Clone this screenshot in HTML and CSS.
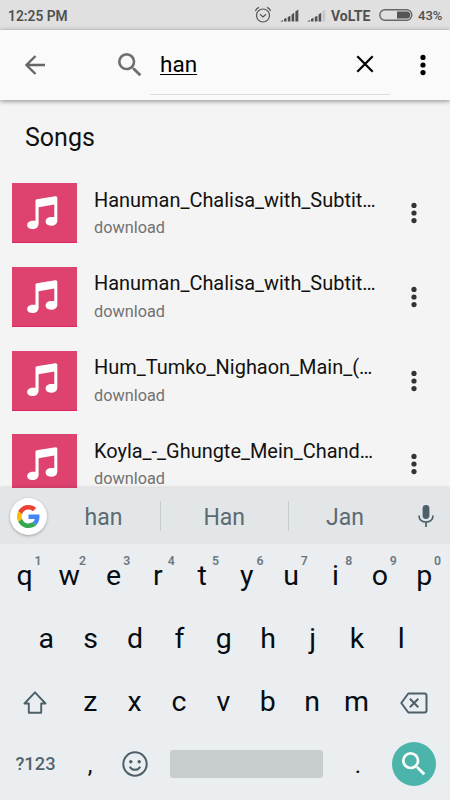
FILE: index.html
```html
<!DOCTYPE html>
<html lang="en">
<head>
<meta charset="utf-8">
<title>Music search</title>
<link rel="stylesheet" href="styles.css">
</head>
<body>
<svg class="defs" aria-hidden="true">
  <symbol id="dots" viewBox="0 0 8 24"><circle cx="4" cy="4.400" r="2.600"/><circle cx="4" cy="12" r="2.600"/><circle cx="4" cy="19.600" r="2.600"/></symbol>
  <symbol id="search" viewBox="0 0 24 24"><path d="M15.500 14h-.79l-.28-.27A6.470 6.470 0 0 0 16 9.500 6.500 6.500 0 1 0 9.500 16c1.610 0 3.090-.59 4.230-1.570l.27.28v.79l5 4.990L20.490 19l-4.990-5zm-6 0C7.010 14 5 11.990 5 9.500S7.010 5 9.500 5 14 7.010 14 9.500 11.990 14 9.500 14z"/></symbol>
  <symbol id="note" viewBox="0 0 31 33"><path d="M8.500 4.800Q8.500 3.600 9.900 3.200L28.400.2Q30.300 0 30.300 1.800V24.500C30.300 28.300 27.500 29.700 24 29.700C20.600 29.700 18.600 28.300 18.600 25.600C18.600 22.700 21 21 24.500 21H27.300V8.600L11.600 11.200V27.300C11.600 31.400 9 33 5.500 33C2 33 .2 31.600.2 29.200C.2 26.300 2.600 24.700 6 24.700H8.500Z"/></symbol>
  <symbol id="signal" viewBox="0 0 19 13"><path d="M0 12.500 3 11V12.500ZM4 10l2.500-1.200v3.700H4ZM7.800 8l2.600-1.300v5.800H7.800ZM11.600 5.500l2.600-1.700v8.700h-2.600Z"/></symbol>
</svg>
<div class="screen">
  <div class="status">
    <span class="time">12:25 PM</span>
    <svg class="alarm" viewBox="0 0 18 18"><circle cx="9" cy="9.500" r="6.500"/><path d="M1.400 5Q2.300 2.300 5 1.400M13 1.400Q15.700 2.300 16.600 5M6 8.300 9 11l3-2.700"/></svg>
    <svg class="signal" viewBox="0 0 19 13"><use href="#signal"/><path d="M15.400 2.500 18.300.5v12h-2.900Z"/></svg>
    <svg class="signal second" viewBox="0 0 19 13"><use href="#signal"/><path class="faint" d="M15.400 2.500 18.300.5v12h-2.900Z"/></svg>
    <span class="volte">VoLTE</span>
    <svg class="battery" viewBox="0 0 34 12"><rect class="shell" x=".8" y=".8" width="32" height="10.400" rx="5.200"/><path class="charge" d="M18 2.500H28.500Q31.300 3 31.300 6T28.500 9.500H18Z"/></svg>
    <span class="percent">43%</span>
  </div>

  <header class="toolbar">
    <svg class="back" viewBox="0 0 20 20"><path d="M10.500 1 1.500 10l9 9M1.500 10H20"/></svg>
    <div class="field">
      <svg class="lens"><use href="#search"/></svg>
      <div class="query"><span class="typed">han</span>
        <svg class="clear" viewBox="0 0 18 18"><path d="m1.300 1.300 15.400 15.400M16.700 1.300 1.300 16.700"/></svg>
      </div>
    </div>
    <svg class="more"><use href="#dots"/></svg>
  </header>

  <main class="results">
    <h1>Songs</h1>
    <div class="song"><div class="cover"><svg><use href="#note"/></svg></div><div class="info"><div class="title">Hanuman_Chalisa_with_Subtit…</div><div class="folder">download</div></div><svg class="menu"><use href="#dots"/></svg></div>
    <div class="song"><div class="cover"><svg><use href="#note"/></svg></div><div class="info"><div class="title">Hanuman_Chalisa_with_Subtit…</div><div class="folder">download</div></div><svg class="menu"><use href="#dots"/></svg></div>
    <div class="song"><div class="cover"><svg><use href="#note"/></svg></div><div class="info"><div class="title">Hum_Tumko_Nighaon_Main_(…</div><div class="folder">download</div></div><svg class="menu"><use href="#dots"/></svg></div>
    <div class="song"><div class="cover"><svg><use href="#note"/></svg></div><div class="info"><div class="title">Koyla_-_Ghungte_Mein_Chand…</div><div class="folder">download</div></div><svg class="menu"><use href="#dots"/></svg></div>
  </main>

  <section class="keyboard">
    <div class="suggestions">
      <div class="google"><svg viewBox="0 0 48 48"><path fill="#ea4335" d="M24 9.500c3.540 0 6.710 1.220 9.210 3.600l6.850-6.850C35.900 2.380 30.470 0 24 0 14.620 0 6.510 5.380 2.560 13.220l7.980 6.190C12.430 13.720 17.740 9.500 24 9.500z"/><path fill="#4285f4" d="M46.980 24.550c0-1.570-.15-3.090-.38-4.550H24v9.020h12.940c-.58 2.960-2.260 5.480-4.780 7.180l7.730 6c4.510-4.180 7.090-10.360 7.090-17.650z"/><path fill="#fbbc05" d="M10.530 28.590c-.48-1.450-.76-2.990-.76-4.590s.27-3.140.76-4.590l-7.980-6.190C.92 16.460 0 20.120 0 24s.92 7.540 2.560 10.780l7.970-6.190z"/><path fill="#34a853" d="M24 48c6.480 0 11.930-2.130 15.890-5.810l-7.730-6c-2.150 1.450-4.920 2.300-8.160 2.300-6.260 0-11.570-4.220-13.470-9.910l-7.980 6.190C6.510 42.620 14.620 48 24 48z"/></svg></div>
      <span class="word">han</span><span class="word">Han</span><span class="word">Jan</span>
      <svg class="mic" viewBox="0 0 16 22"><rect x="4.600" y="0" width="6.800" height="14" rx="3.400"/><path d="M1 10.500C1 14.500 4 17 8 17s7-2.500 7-6.500M8 17v5"/></svg>
    </div>
    <div class="row top">
      <span class="key">q<sup>1</sup></span><span class="key">w<sup>2</sup></span><span class="key">e<sup>3</sup></span><span class="key">r<sup>4</sup></span><span class="key">t<sup>5</sup></span><span class="key">y<sup>6</sup></span><span class="key">u<sup>7</sup></span><span class="key">i<sup>8</sup></span><span class="key">o<sup>9</sup></span><span class="key">p<sup>0</sup></span>
    </div>
    <div class="row middle">
      <span class="key">a</span><span class="key">s</span><span class="key">d</span><span class="key">f</span><span class="key">g</span><span class="key">h</span><span class="key">j</span><span class="key">k</span><span class="key">l</span>
    </div>
    <div class="row lower">
      <span class="wide"><svg class="shift" viewBox="0 0 24 24"><path d="M12 1.300 1.500 12.500h4.300v9.300h12.400v-9.300h4.300Z"/></svg></span>
      <span class="key">z</span><span class="key">x</span><span class="key">c</span><span class="key">v</span><span class="key">b</span><span class="key">n</span><span class="key">m</span>
      <span class="wide"><svg class="erase" viewBox="0 0 28 22"><path d="M8.300 1.500H24.500Q26.500 1.500 26.500 3.500v15q0 2-2 2H8.300L1.300 11ZM9.900 6.800l8.400 8.400M18.300 6.800l-8.400 8.400" /></svg></span>
    </div>
    <div class="row bottom">
      <span class="symbols">?123</span>
      <span class="key mark">,</span>
      <span class="key"><svg class="smile" viewBox="0 0 26 26"><circle class="line" cx="13" cy="13" r="11.700"/><circle cx="8.800" cy="10.700" r="1.700"/><circle cx="17.200" cy="10.700" r="1.700"/><path class="line" d="M7.800 15.700Q9.500 18.800 13 18.800t5.200-3.100"/></svg></span>
      <span class="space"></span>
      <span class="key mark stop">.</span>
      <span class="enter"><svg><use href="#search"/></svg></span>
    </div>
  </section>
</div>
</body>
</html>
```
FILE: styles.css
```css
* { box-sizing: border-box; }
body { margin: 0; font-family: Roboto, "Liberation Sans", sans-serif; }
svg { display: block; flex: none; }
.defs { position: absolute; width: 0; height: 0; }

.screen { width: 450px; height: 800px; overflow: hidden; display: flex; flex-direction: column; background: #f4f4f4; }

.status { flex: none; height: 30px; display: flex; align-items: center; padding: 1px 8px 0; background: #e0e0e0; color: #505050; font-size: 14px; font-weight: 500; }
.time { flex: 1; font-weight: 600; font-size: 13.8px; }
.alarm { width: 18px; height: 18px; margin: -2px 8px 0 0; fill: none; stroke: #555; stroke-width: 1.2; }
.signal { width: 19px; height: 13px; margin-right: 8px; fill: #505050; }
.signal.second { margin-right: 5px; }
.faint { fill: #c8c8c8; }
.volte { width: 41px; margin-right: 7px; font-weight: 700; }
.battery { width: 34px; height: 12px; margin-right: 5px; margin-top: -1px; }
.shell { fill: none; stroke: #666; stroke-width: 1.4; }
.charge { fill: #555; }
.percent { width: 24px; font-size: 13px; white-space: nowrap; }

.toolbar { position: relative; flex: none; height: 70px; display: flex; align-items: center; padding: 0 23.5px 0 25px; background: #fafafa; box-shadow: 0 1px 5px rgba(0, 0, 0, .45); }
.back { width: 20px; height: 20px; margin-right: 69px; fill: none; stroke: #666; stroke-width: 2.3; }
.field { display: flex; align-items: flex-start; height: 70px; width: 276px; }
.lens { width: 32px; height: 32px; margin: 19px 4px 0 0; fill: #6e6e6e; }
.query { width: 240px; height: 65px; padding: 4px 16px 0 10px; border-bottom: 1px solid #dcdcdc; display: flex; align-items: center; justify-content: space-between; }
.typed { color: #000; font-size: 22.5px; line-height: 28px; text-decoration: underline; text-decoration-thickness: 1px; text-underline-offset: 2px; }
.clear { width: 18px; height: 18px; fill: none; stroke: #000; stroke-width: 2.2; }
.more { width: 8px; height: 24px; margin-left: auto; fill: #000; }

.results { flex: none; height: 388px; overflow: hidden; }
h1 { margin: 0; padding: 23px 25px 0; height: 83.300px; font-size: 25px; line-height: 30px; font-weight: 400; color: #111; }
.song { display: flex; height: 83.7px; padding-left: 11.5px; }
.cover { width: 65.500px; height: 60px; padding: 12.700px 0 0 15px; background: #de4370; border-bottom: 1px solid #e02468; }
.cover svg { width: 31px; height: 33px; fill: #fff; }
.info { width: 310px; padding: 4.300px 0 0 17px; }
.title { font-size: 19.950px; line-height: 25px; color: #111; white-space: nowrap; }
.folder { margin-top: 4.700px; font-size: 16.300px; line-height: 22px; color: #727272; }
.menu { width: 8px; height: 24px; margin: 18px 0 0 22.500px; fill: #333; }

.keyboard { position: relative; flex: none; height: 312px; background: #ebeef1; box-shadow: 0 -1px 3px rgba(0, 0, 0, .12); }
.suggestions { height: 56px; display: flex; align-items: center; background: #e2e6e9; }
.google { width: 37px; height: 37px; margin: 0 0 0 10px; border-radius: 50%; background: #fff; display: grid; place-items: center; box-shadow: 0 1px 3px rgba(0, 0, 0, .3); }
.google svg { width: 23px; height: 23px; }
.word { width: 127.500px; height: 30px; border-right: 1px solid #c7cccf; text-align: center; font-size: 23px; line-height: 34px; color: #5c6a71; }
.google + .word { width: 114px; }
.word:nth-child(4) { width: 113px; border: 0; }
.mic { width: 16px; height: 22px; margin-left: 16px; fill: #4d6069; }
.mic path { fill: none; stroke: #4d6069; stroke-width: 1.7; }

.row { height: 63px; display: flex; align-items: center; padding: 0 2.500px; }
.key { position: relative; width: 44.400px; height: 63px; display: flex; align-items: center; justify-content: center; font-size: 28.500px; line-height: 34px; color: #060c12; }
.key sup { position: absolute; top: 9px; left: 32px; font-size: 12.300px; line-height: 16px; font-weight: 600; color: #6b7982; }
.middle { padding-left: 24px; }
.wide { width: 65.500px; display: flex; justify-content: center; }
.shift { width: 24px; height: 24px; margin-top: 2px; fill: none; stroke: #4d6069; stroke-width: 1.9; stroke-linejoin: round; }
.erase { width: 28px; height: 22px; margin: 3px 0 0 5px; fill: none; stroke: #4d6069; stroke-width: 2; stroke-linejoin: round; }
.bottom { margin-top: -1px; padding-left: 3px; }
.symbols { width: 65px; text-align: center; font-size: 18.300px; font-weight: 500; color: #52646d; }
.mark { font-size: 24px; padding-top: 3px; }
.smile { width: 26px; height: 26px; fill: #4d6069; }
.smile .line { fill: none; stroke: #4d6069; stroke-width: 2; }
.space { width: 153.500px; height: 28px; margin-left: 13px; border-radius: 3px; background: #c8cdcf; }
.stop { margin-left: 12.500px; }
.enter { width: 44px; height: 44px; margin-left: 11.500px; border-radius: 50%; background: #4bb5ab; display: grid; place-items: center; }
.enter svg { width: 32px; height: 32px; fill: #fff; }
```
